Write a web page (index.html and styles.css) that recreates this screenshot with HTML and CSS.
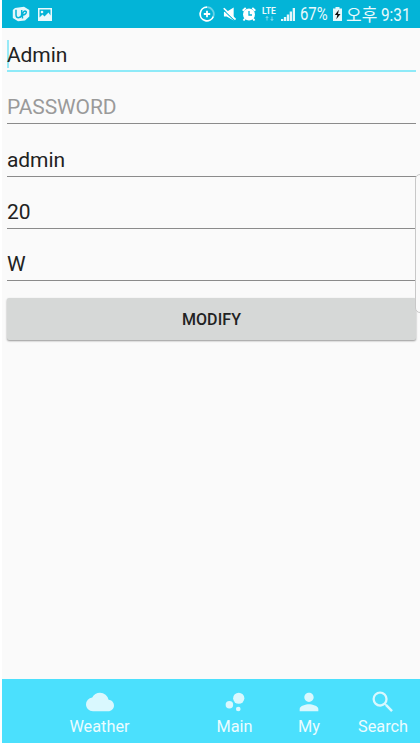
FILE: index.html
```html
<!DOCTYPE html>
<html lang="ko">
<head>
<meta charset="utf-8">
<title>Modify</title>
<link rel="stylesheet" href="styles.css">
</head>
<body>
<div class="screen">
  <header class="status">
    <svg class="ic-u" viewBox="0 0 18 16"><path d="M3 2 12 .8 17.3 4v6.500L13 14.500 6 15.200.8 12V4z" fill="#e4f7fb"/><path d="M4 3.800v5q0 3.200 3 2.800 2.700-.4 2.700-3.400V4M10.500 12.500Q10 5.500 13 5q2.200.3.800 2.600-1 1.200-2.600 1.400" fill="none" stroke="#03b4d7" stroke-width="1.500"/></svg>
    <svg class="ic-photo" viewBox="0 0 14 13"><path fill-rule="evenodd" d="M0 0h14v13H0zM1.500 1.500v8l3-3 2 2 4-4 2 3v-6z" fill="#e9f9fc"/><circle cx="4" cy="4" r="1.300" fill="#e9f9fc"/></svg>
    <span class="gap"></span>
    <svg class="ic-data" viewBox="0 0 16 16"><g fill="none" stroke="#fff"><path d="M8 1.200a6.800 6.800 0 1 0 6.300 9.300" stroke-width="1.800"/><path d="M8 1.200a6.800 6.800 0 0 1 6.300 9.300" stroke-width="1.800" opacity=".4"/><path d="M8 4.800v6.400M4.800 8h6.400" stroke-width="1.800"/></g></svg>
    <svg class="ic-mute" viewBox="0 0 14 14"><path d="M1 4.500h3L11.500 0v14L4 9.800H1z" fill="#fff"/><path d="M0 2.200 12.500 14.200" stroke="#03b4d7" stroke-width="1.200"/><path d="M.8.800 13.500 13" stroke="#fff" stroke-width="1.800"/></svg>
    <svg class="ic-alarm" viewBox="0 0 14 14"><circle cx="7" cy="7.500" r="6" fill="#fff"/><path d="M.7 3.700 3.700.9M13.300 3.700l-3-2.800M3 11.500l-1.500 2M11 11.500l1.500 2" stroke="#fff" stroke-width="1.900"/><path d="M7 4v4h3" fill="none" stroke="#03b4d7" stroke-width="1.300"/></svg>
    <span class="lte">LTE<svg viewBox="0 0 9 5"><path d="M2 4.500V.5M.7 2 2 .5 3.300 2M7 .5v4M5.700 3 7 4.500 8.300 3" fill="none" stroke="#fff" stroke-width=".8" opacity=".6"/></svg></span>
    <svg class="ic-signal" viewBox="0 0 14 13"><path d="M0 11h2.300v2H0zM2.900 9h2.300v4H2.900zM5.800 6.500h2.300V13H5.800zM8.700 3.500H11V13H8.700zM11.700 0H14v13h-2.300z" fill="#e4f7fb"/></svg>
    <span class="percent">67%</span>
    <svg class="ic-battery" viewBox="0 0 9 14"><path d="M2.500 0h4v1.500H9V14H0V1.500h2.500z" fill="#e4f7fb"/><path d="M5.800 2.800 1.800 8h2.500L3.300 12.200 7.500 7H5z" fill="#111"/></svg>
    <span class="ampm">오후</span>
    <span class="clock">9:31</span>
  </header>
  <main class="form">
    <div class="field focused"><span>Admin</span></div>
    <div class="field hint"><span>PASSWORD</span></div>
    <div class="field"><span>admin</span></div>
    <div class="field"><span>20</span></div>
    <div class="field"><span>W</span></div>
    <button class="modify">MODIFY</button>
  </main>
  <div class="edge-handle"></div>
  <nav class="tabs">
    <div class="tab"><svg viewBox="0 0 24 24"><path d="M19.350 10.040A7.490 7.490 0 0 0 12 4C9.110 4 6.600 5.640 5.350 8.040A5.994 5.994 0 0 0 0 14c0 3.310 2.690 6 6 6h13c2.760 0 5-2.240 5-5 0-2.640-2.050-4.780-4.650-4.960z"/></svg><span>Weather</span></div>
    <div class="tab"><svg viewBox="0 0 24 24"><circle cx="7.200" cy="14.400" r="3.200"/><circle cx="14.800" cy="18" r="2"/><circle cx="15.200" cy="8.800" r="4.800"/></svg><span>Main</span></div>
    <div class="tab"><svg viewBox="0 0 24 24"><path d="M12 12c2.210 0 4-1.790 4-4s-1.790-4-4-4-4 1.790-4 4 1.790 4 4 4zm0 2c-2.670 0-8 1.340-8 4v2h16v-2c0-2.660-5.330-4-8-4z"/></svg><span>My</span></div>
    <div class="tab"><svg viewBox="0 0 24 24"><path d="M15.500 14h-.79l-.28-.27A6.471 6.471 0 0 0 16 9.500 6.500 6.500 0 1 0 9.500 16c1.610 0 3.090-.59 4.230-1.570l.27.28v.79l5 4.990L20.490 19l-4.990-5zm-6 0C7.010 14 5 11.990 5 9.500S7.010 5 9.500 5 14 7.010 14 9.500 11.990 14 9.500 14z"/></svg><span>Search</span></div>
  </nav>
</div>
</body>
</html>
```
FILE: styles.css
```css
* { box-sizing: border-box; }
body { margin: 0; background: #fff; font-family: Roboto, "Noto Sans CJK KR", sans-serif; }
svg { display: block; flex: none; }
.screen { position: relative; display: flex; flex-direction: column; height: 743px; margin-left: 2px; background: #fafafa; overflow: hidden; }
.status { display: flex; align-items: center; height: 28px; flex: none; padding: 0 9px 0 10px; background: #03b4d7; color: #e9f9fc; white-space: nowrap; }
.gap { flex: 1; }
.ic-u { width: 18px; height: 16px; margin-right: 8px; }
.ic-photo { width: 14px; height: 13px; }
.ic-data { width: 16px; height: 16px; margin-right: 8px; }
.ic-mute { width: 13px; height: 14px; margin-right: 6px; }
.ic-alarm { width: 14px; height: 14px; margin-right: 6px; }
.lte { width: 15px; margin-right: 4px; font-size: 8.500px; line-height: 8px; font-weight: 700; }
.lte svg { width: 9px; height: 5px; margin: 1px auto 0; }
.ic-signal { width: 14px; height: 13px; margin-right: 5px; }
.percent { width: 29px; font-size: 17.500px; transform: scaleX(.85); transform-origin: left; }
.ic-battery { width: 9px; height: 14px; margin: 0 4px 0 4px; }
.ampm { width: 31px; font-size: 17px; line-height: 24px; margin: 2px 4px 0 0; }
.clock { width: 30px; font-size: 18px; transform: scaleX(.85); transform-origin: left; }
.form { display: flex; flex-direction: column; flex: 1; padding: 0 4px 0 5px; }
.field { height: 52.300px; display: flex; align-items: flex-end; padding-bottom: 3px; border-bottom: 1px solid #8b8b8b; color: #222; font-size: 21px; line-height: 25px; letter-spacing: -.1px; }
.focused { height: 44px; padding-bottom: 2px; border-bottom: 2px solid #8eeaf8; position: relative; }
.focused::before { content: ""; position: absolute; left: 0; top: 12px; width: 2px; height: 28px; background: #98e9f6; }
.focused span { position: relative; }
.hint { color: #9a9a9a; }
.modify { height: 42px; margin-top: 16.800px; padding: 2px 0 0; border: 0; border-radius: 2px; background: #d6d8d7; box-shadow: 0 1px 2px #0006; color: #222; font: 500 16px Roboto, sans-serif; letter-spacing: .1px; }
.edge-handle { position: absolute; left: 413px; top: 174px; width: 12px; height: 139px; border: 1px solid #c8c8c8; border-radius: 5px; background: #fafafa; }
.tabs { display: grid; grid-template-columns: 195px 75px 74px 74px; height: 64px; flex: none; background: #4be0fd; color: #ecfcff; }
.tab { display: flex; flex-direction: column; align-items: center; padding-top: 9px; font-size: 16.300px; line-height: 19px; }
.tab svg { width: 28px; height: 28px; margin-bottom: 1px; fill: #d9f8fe; }
```
